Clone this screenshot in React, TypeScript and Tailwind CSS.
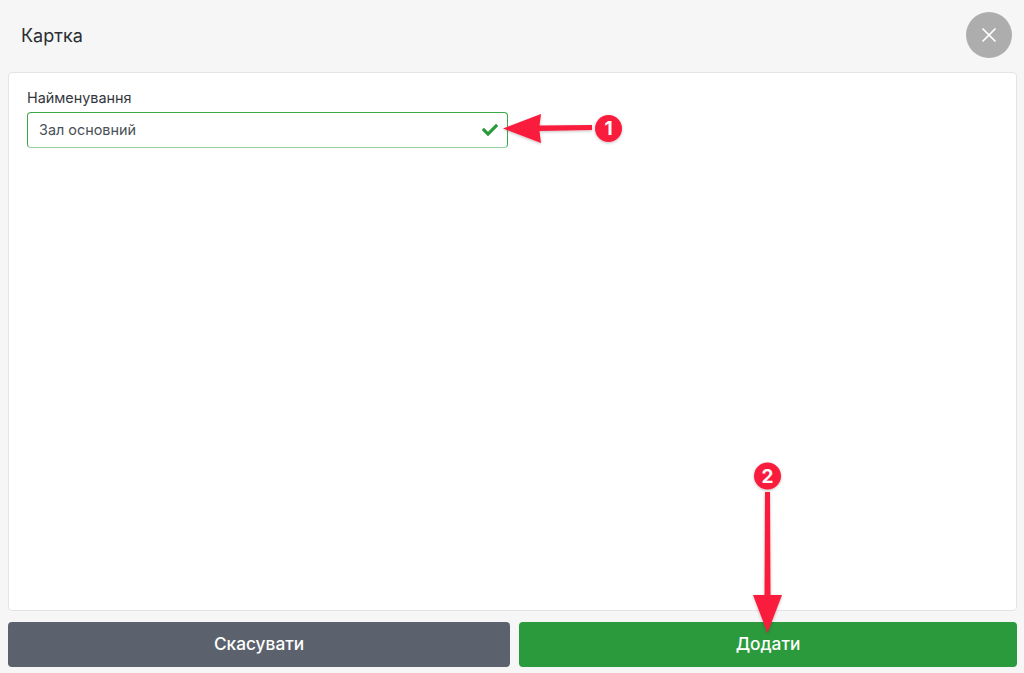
import React from 'react';
import { X } from 'lucide-react';
import { FaCheck } from 'react-icons/fa';

const Annotations: React.FC = () => (
  <svg className="absolute left-0 top-0 pointer-events-none" width="1024" height="673" viewBox="0 0 1024 673">
    <defs>
      <filter id="arrowShadow" x="-20%" y="-20%" width="140%" height="140%">
        <feDropShadow dx="0" dy="1" stdDeviation="1.5" floodColor="#000" floodOpacity="0.25" />
      </filter>
    </defs>
    <g filter="url(#arrowShadow)" fill="#f91c3d">
      {/* arrow 1 */}
      <path d="M503 128.500 L541 114 L539.500 125.500 L592 125 L592 130 L539.500 131 L541 143 Z" />
      <circle cx="608.500" cy="128.500" r="13.500" />
      {/* arrow 2 */}
      <path d="M765 492 L770 492 L770.500 595 L782 595 L767.500 633 L753 595 L764.500 595 Z" />
      <circle cx="767.500" cy="476" r="13.500" />
    </g>
    <text x="608.500" y="135" textAnchor="middle" fill="#fff" fontSize="19" fontWeight="700" fontFamily="Inter, sans-serif">1</text>
    <text x="767.500" y="482.500" textAnchor="middle" fill="#fff" fontSize="19" fontWeight="700" fontFamily="Inter, sans-serif">2</text>
  </svg>
);

export default function App() {
  return (
    <div className="relative w-[1024px] h-[673px] overflow-hidden bg-[#f6f6f6] font-['Inter',sans-serif] flex flex-col">
      {/* Header */}
      <div className="h-[72px] shrink-0 flex items-center justify-between pl-[21px] pr-[12px] pb-[2px]">
        <h1 className="text-[18px] text-[#2b2e33] font-normal">Картка</h1>
        <button type="button" className="w-[46px] h-[46px] rounded-full bg-[#adadad] flex items-center justify-center">
          <X size={24} strokeWidth={1.75} className="text-white" />
        </button>
      </div>

      {/* Form card */}
      <div className="ml-2 mr-[7px] h-[539px] shrink-0 bg-white border border-[#e4e4e4] rounded-[4px] pt-[15px] pl-[18px]">
        <label className="block text-[14.400px] leading-[20px] text-[#33373d] mb-[4px]">Найменування</label>
        <div className="relative w-[481px] h-[36px] border border-[#3da84a] border-b-[#93cf9d] rounded-[4px] flex items-center pl-[11px]">
          <span className="text-[14.400px] text-[#495057]">Зал основний</span>
          <FaCheck size={16} className="absolute right-[9px] top-[9px] text-[#2a9a3c]" />
        </div>
      </div>

      {/* Actions */}
      <div className="mt-[11px] ml-2 mr-[7px] flex gap-[9px]">
        <button type="button" className="w-[502px] h-[45px] pb-[2px] rounded-[4px] bg-[#5b626d] text-white text-[17.300px] font-medium">Скасувати</button>
        <button type="button" className="flex-1 h-[45px] pb-[2px] rounded-[4px] bg-[#2a9a3c] text-white text-[17.300px] font-medium">Додати</button>
      </div>

      <Annotations />
    </div>
  );
}
